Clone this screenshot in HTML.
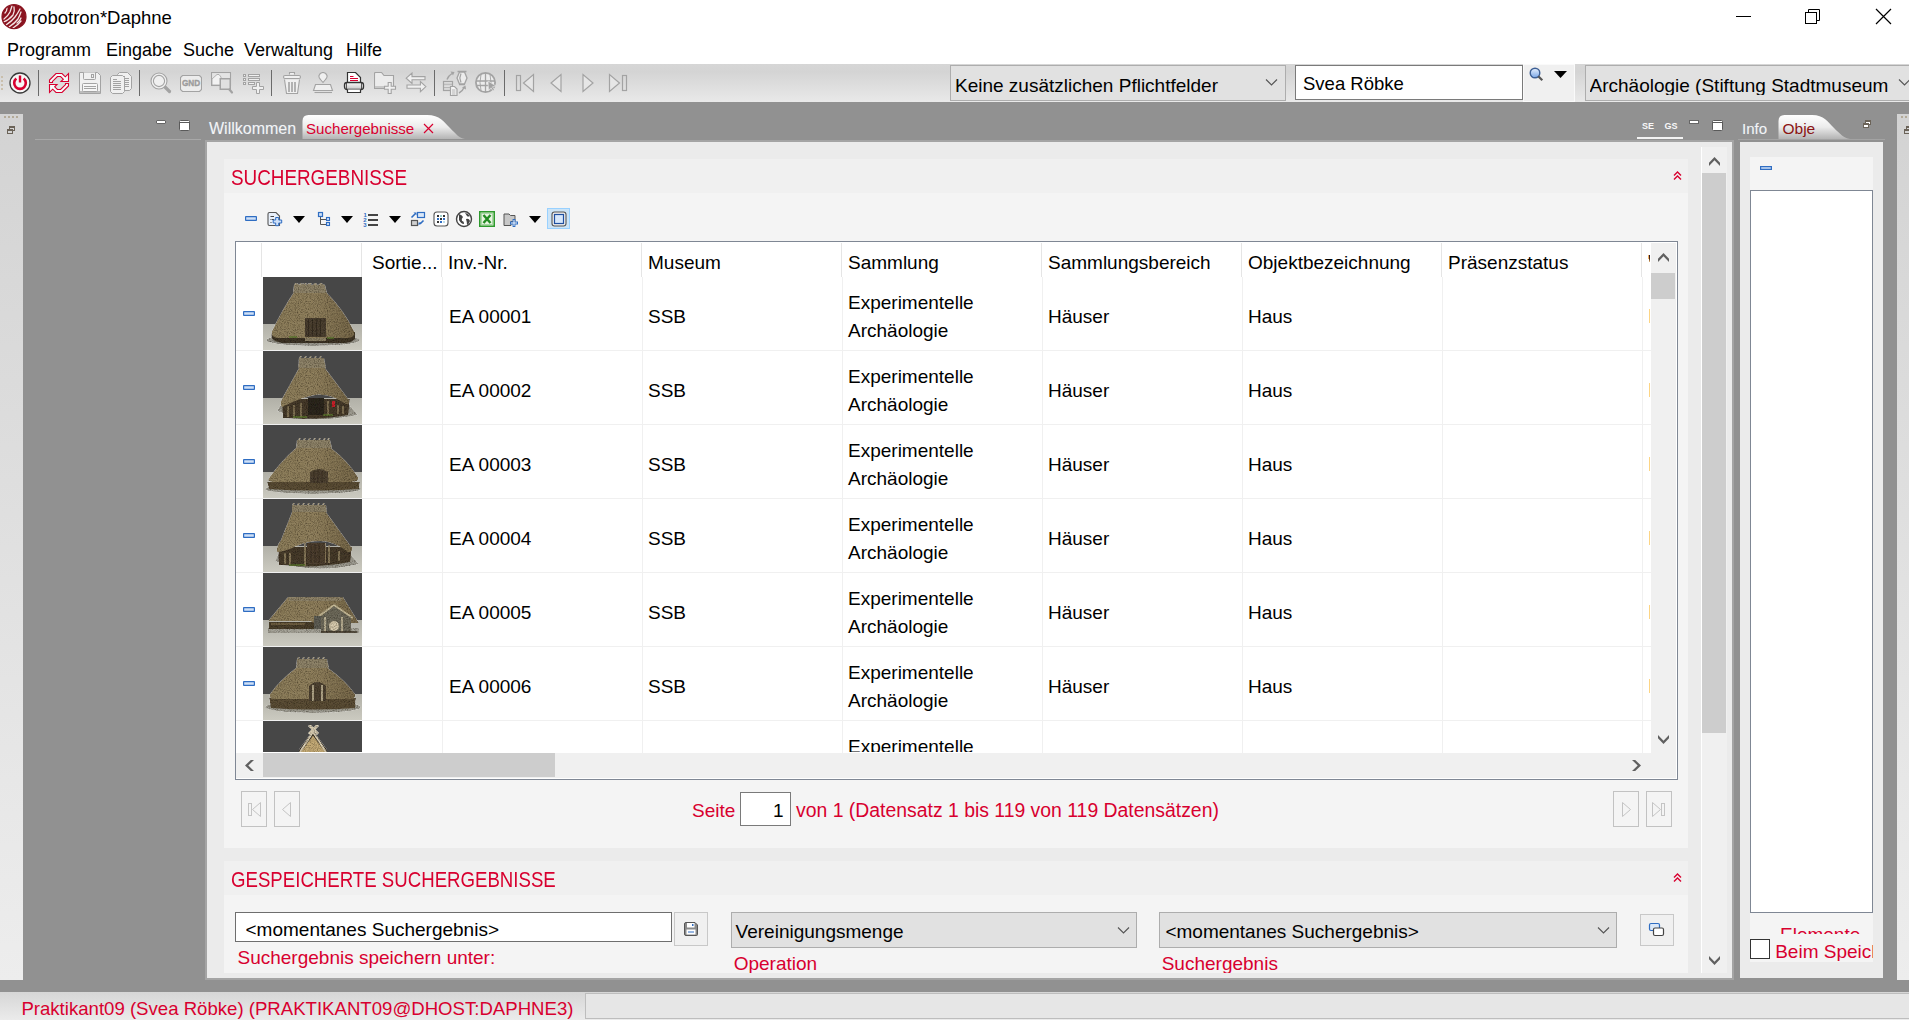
<!DOCTYPE html>
<html><head><meta charset="utf-8"><style>
html,body{margin:0;padding:0;width:1909px;height:1020px;overflow:hidden;background:#919191}
#root{position:relative;width:1909px;height:1020px;overflow:hidden}
#root>div,#root>svg{position:absolute;box-sizing:content-box}
.t{font-family:"Liberation Sans",sans-serif;line-height:1;white-space:pre}
</style></head><body><div id="root">
<svg width="0" height="0" style="left:0;top:0"><defs><linearGradient id="floor" x1="0" y1="0" x2="0" y2="1"><stop offset="0" stop-color="#b1b0a7"/><stop offset="1" stop-color="#cbcac0"/></linearGradient><linearGradient id="thatch" x1="0" y1="0" x2="1" y2="0"><stop offset="0" stop-color="#8c7e5c"/><stop offset=".5" stop-color="#8f805e"/><stop offset="1" stop-color="#76684a"/></linearGradient><filter id="grain" x="0" y="0" width="100%" height="100%"><feTurbulence type="fractalNoise" baseFrequency="0.9" numOctaves="2" seed="4" result="n"/><feColorMatrix in="n" type="matrix" values="1.4 0 0 0 0.15  1.4 0 0 0 0.13  1.4 0 0 0 0.1  0 0 0 0 1" result="g"/><feBlend in="SourceGraphic" in2="g" mode="multiply" result="b"/><feComposite in="b" in2="SourceGraphic" operator="in"/></filter></defs></svg>
<div style="left:0px;top:0px;width:1909px;height:64px;background:#fff"></div>
<svg style="left:0px;top:0px;" width="30" height="30" viewBox="0 0 30 30"><circle cx="14" cy="16.7" r="12" fill="#8a1420"/><g stroke="#f4e4e4" stroke-width="1.3" fill="none" stroke-linecap="round"><path d="M4 19Q8 16 10 12Q11 9 12 6"/><path d="M3.5 22Q9 20 13 15Q15 11 14 7"/><path d="M6 25Q12 21 15 17Q18 13 20 9"/><path d="M9 27Q15 23 18 19Q20 15 21 12"/><path d="M13 28Q18 25 21 21"/><path d="M5 13Q7 11 7 8"/><path d="M17 23Q20 21 21 18"/></g><circle cx="14" cy="16.7" r="12" fill="none" stroke="#8a1420" stroke-width="1.2"/></svg>
<div class="t " style="left:31px;top:9.00px;font-size:18.5px;color:#000;">robotron*Daphne</div>
<div style="left:1736px;top:16px;width:15px;height:1px;background:#000"></div>
<svg style="left:1804px;top:8px;" width="18" height="18" viewBox="0 0 18 18"><rect x="1.5" y="4.5" width="11" height="11" fill="none" stroke="#000"/><path d="M4.5 4.5V1.5h11v11h-3" fill="none" stroke="#000"/></svg>
<svg style="left:1875px;top:8px;" width="17" height="17" viewBox="0 0 17 17"><path d="M1 1L16 16M16 1L1 16" stroke="#000" stroke-width="1.2"/></svg>
<div class="t " style="left:7px;top:41.00px;font-size:18px;color:#000;">Programm</div>
<div class="t " style="left:106px;top:41.00px;font-size:18px;color:#000;">Eingabe</div>
<div class="t " style="left:183px;top:41.00px;font-size:18px;color:#000;">Suche</div>
<div class="t " style="left:244px;top:41.00px;font-size:18px;color:#000;">Verwaltung</div>
<div class="t " style="left:346px;top:41.00px;font-size:18px;color:#000;">Hilfe</div>
<div style="left:0px;top:64px;width:1909px;height:38px;background:linear-gradient(#d6d6d6,#d4d4d4 20%,#e9e9e9)"></div>
<div style="left:1px;top:76px;width:2px;height:2px;background:#c4b69c;border-radius:1px"></div>
<div style="left:1px;top:80px;width:2px;height:2px;background:#c4b69c;border-radius:1px"></div>
<div style="left:1px;top:84px;width:2px;height:2px;background:#c4b69c;border-radius:1px"></div>
<div style="left:1px;top:88px;width:2px;height:2px;background:#c4b69c;border-radius:1px"></div>
<div style="left:38px;top:70px;width:1px;height:26px;background:#6a6a6a"></div>
<div style="left:139px;top:70px;width:1px;height:26px;background:#6a6a6a"></div>
<div style="left:271px;top:70px;width:1px;height:26px;background:#6a6a6a"></div>
<div style="left:434px;top:70px;width:1px;height:26px;background:#6a6a6a"></div>
<div style="left:504px;top:70px;width:1px;height:26px;background:#6a6a6a"></div>
<svg style="left:9px;top:72px;" width="22" height="22" viewBox="0 0 22 22"><circle cx="11" cy="11" r="10" fill="#f6f6f6" stroke="#383838" stroke-width="1.3"/><path d="M7.3 6.6A5.8 5.8 0 1 0 14.7 6.6" fill="none" stroke="#d8002f" stroke-width="2.6"/><path d="M11 3.5v7" stroke="#d8002f" stroke-width="2.4"/></svg>
<svg style="left:46px;top:70px;" width="26" height="26" viewBox="0 0 26 26"><g fill="#f6fbfb" stroke="#d8002f" stroke-width="1.1" stroke-linejoin="miter"><path d="M3.5 12.5L3.5 10L10 3.5L16 3.5L19.3 6.8L22.5 3.6L22.5 11.5L15 11.5L17.3 9.2L14.6 6.5L11.4 6.5L6.5 11.4L6.5 12.5Z"/><path d="M22.5 13.5L22.5 16L16 22.5L10 22.5L6.7 19.2L3.5 22.4L3.5 14.5L11 14.5L8.7 16.8L11.4 19.5L14.6 19.5L19.5 14.6L19.5 13.5Z"/></g></svg>
<svg style="left:79px;top:72px;" width="22" height="22" viewBox="0 0 22 22"><path d="M0.5 0.5H18.5L21.5 3.5V21.5H0.5Z" fill="#f0f0f0" stroke="#a3a3a3"/><rect x="1" y="19" width="20" height="2" fill="#bdbdbd"/><path d="M4.5 0.5V6.5Q4.5 7.5 5.5 7.5H15.5Q16.5 7.5 16.5 6.5V0.5" fill="#f0f0f0" stroke="#a3a3a3"/><rect x="12.5" y="2.5" width="2" height="3" fill="none" stroke="#a3a3a3"/><rect x="3.5" y="11.5" width="15" height="8" rx="1" fill="#f6f6f6" stroke="#a3a3a3"/><path d="M5 14.5H17M5 16.5H17" stroke="#a3a3a3"/></svg>
<svg style="left:110px;top:72px;" width="22" height="23" viewBox="0 0 22 23"><path d="M9.5 0.5H17.5L21.5 4.5V16.5L19.5 18.5H9.5L7.5 16.5V2.5Z" fill="#f0f0f0" stroke="#a3a3a3"/><path d="M11 4.5H15M11 6.5H19M11 8.5H19M11 10.5H19M11 12.5H19M11 14.5H19" stroke="#a3a3a3"/><path d="M2.5 3.5H12.5L14.5 5.5V19.5L12.5 21.5H2.5L0.5 19.5V5.5Z" fill="#f0f0f0" stroke="#a3a3a3"/><path d="M3 7.5H7M3 9.5H11M3 11.5H11M3 13.5H11M3 15.5H11M3 17.5H11" stroke="#a3a3a3"/></svg>
<svg style="left:150px;top:72px;" width="22" height="22" viewBox="0 0 22 22"><path d="M14 14L19.5 19.5" stroke="#a3a3a3" stroke-width="3.2" stroke-linecap="round"/><circle cx="9" cy="9" r="8" fill="#f0f0f0" stroke="#a3a3a3" stroke-width="1.1"/><circle cx="9" cy="9" r="5.6" fill="#f0f0f0" stroke="#a3a3a3" stroke-width="1.1"/></svg>
<svg style="left:180px;top:75px;" width="22" height="17" viewBox="0 0 22 17"><path d="M2.5 0.5H19.5L21.5 2.5V14.5L19.5 16.5H2.5L0.5 14.5V2.5Z" fill="#ececec" stroke="#a3a3a3" stroke-width="1.1"/><text x="11" y="11.2" font-family="Liberation Sans" font-weight="bold" font-size="8.2" fill="#9c9c9c" stroke="#9c9c9c" stroke-width="0.35" text-anchor="middle">GND</text></svg>
<svg style="left:211px;top:72px;" width="23" height="23" viewBox="0 0 23 23"><rect x="0.5" y="0.5" width="19" height="13" fill="#e4e4e4" stroke="#a3a3a3" stroke-width="1.1"/><path d="M1 7L6 2.5H8L10 5V13H1Z" fill="#f2f2f2" stroke="#a3a3a3" stroke-width="0.8"/><rect x="9.25" y="6.75" width="10" height="10.5" fill="#e0e0e0" stroke="#a3a3a3" stroke-width="1.5"/><path d="M18.5 17.5L21 20.5" stroke="#a3a3a3" stroke-width="2.2" stroke-linecap="round"/></svg>
<svg style="left:242px;top:72px;" width="23" height="23" viewBox="0 0 23 23"><g fill="#f0f0f0" stroke="#a3a3a3"><rect x="1.5" y="2.5" width="2" height="2"/><rect x="1.5" y="6.5" width="2" height="2"/><rect x="1.5" y="10.5" width="2" height="2"/><rect x="6.5" y="2.5" width="11" height="2"/><rect x="6.5" y="6.5" width="11" height="2"/><rect x="6.5" y="10.5" width="6" height="2"/><path d="M14.5 10.5H17.5V14.5H21.5V17.5H17.5V21.5H14.5V17.5H10.5V14.5H14.5Z"/></g></svg>
<svg style="left:282px;top:72px;" width="20" height="23" viewBox="0 0 20 23"><g fill="#f0f0f0" stroke="#a3a3a3" stroke-width="1.1"><path d="M7.5 2.5V0.5H12.5V2.5"/><rect x="1.5" y="3.5" width="17" height="3" rx="1.5"/><path d="M2.5 7.5L4.5 21.5H15.5L17.5 7.5"/></g><path d="M7 10v10M10 10v10M13 10v10" stroke="#a3a3a3" stroke-width="1.6"/></svg>
<svg style="left:312px;top:72px;" width="22" height="22" viewBox="0 0 22 22"><g fill="#f0f0f0" stroke="#a3a3a3" stroke-width="1.1"><path d="M11 10.5L8.5 7.5Q6.5 5.5 7 3.5Q8 0.5 11 0.5Q14 0.5 15 3.5Q15.5 5.5 13.5 7.5Z"/><path d="M1.5 18.5L3.5 12.5H18.5L20.5 18.5Z"/></g><path d="M2.5 20.5H20" stroke="#a3a3a3" stroke-width="1.1"/></svg>
<svg style="left:343px;top:72px;" width="22" height="22" viewBox="0 0 22 22"><defs><linearGradient id="pg" x1="0" y1="0" x2="0" y2="1"><stop offset="0" stop-color="#fafafa"/><stop offset="1" stop-color="#c4c4c4"/></linearGradient></defs><path d="M4.5 10.5V0.5H12.5L17.5 5.5V10.5" fill="#fff" stroke="#333" stroke-width="1.2"/><path d="M7 4.5H10.5M7 6.5H15M7 8.5H15" stroke="#d8002f" stroke-width="1"/><rect x="1.5" y="10.5" width="19" height="7" rx="2.5" fill="url(#pg)" stroke="#333" stroke-width="1.3"/><path d="M3.5 11v6M18.5 11v6" stroke="#333" stroke-width="0.8"/><path d="M4.5 17.5V20.5H17.5V17.5" fill="#fff" stroke="#333" stroke-width="1.2"/></svg>
<svg style="left:374px;top:72px;" width="23" height="23" viewBox="0 0 23 23"><path d="M0.5 1.5Q0.5 0.5 1.5 0.5H7.5L10 3.5H19.5V16.5H0.5Z" fill="#ececec" stroke="#a3a3a3" stroke-width="1.1"/><rect x="1" y="14" width="18" height="2" fill="#c8c8c8"/><path d="M14.2 10.5H17.2V14.2H21.5V17.2H17.2V21.5H14.2V17.2H10.5V14.2H14.2Z" fill="#f0f0f0" stroke="#a3a3a3" stroke-width="1.1"/></svg>
<svg style="left:405px;top:72px;" width="22" height="22" viewBox="0 0 22 22"><g fill="#f0f0f0" stroke="#a3a3a3" stroke-width="1.1"><path d="M1.2 6.2L7 1V4.6H20V7.8H7V11.4Z"/><path d="M20.9 14.6L15.4 9.5V13H2V16.2H15.4V19.7Z"/></g></svg>
<svg style="left:442px;top:70px;" width="26" height="27" viewBox="0 0 26 27"><path d="M5 9.5Q6.5 5.5 10 3.5" fill="none" stroke="#a3a3a3" stroke-width="1.4"/><path d="M8.5 1.5l4 0.5-1.5 3.5z" fill="#a3a3a3"/><path d="M15.5 1.5h9M17 14.5h6" stroke="#a3a3a3" stroke-width="1.5"/><path d="M17.5 2l-2.5 6 2.5 6h5l2.5-6-2.5-6z" fill="#ececec" stroke="#a3a3a3" stroke-width="1.3"/><path d="M19 3.5l-1.2 4.5 1.2 4.5" fill="none" stroke="#a3a3a3" stroke-width="1.2"/><rect x="1.5" y="11.5" width="9" height="9" fill="#ececec" stroke="#a3a3a3" stroke-width="1.2"/><path d="M2.5 13.2h1M4.5 13.2h1M6.5 13.2h1M8.5 13.2h1M2.5 19h1M4.5 19h1M6.5 19h1" stroke="#a3a3a3" stroke-width="1"/><path d="M2 14.8h8M2 17.3h8" stroke="#a3a3a3" stroke-width="0.9"/><path d="M8.5 16.5h4l2.5 2.5v6.5H8.5z" fill="#f4f4f4" stroke="#a3a3a3" stroke-width="1.2"/><path d="M10 20h3.5M10 22h3.5M10 24h3.5" stroke="#a3a3a3" stroke-width="0.8"/><path d="M17 23Q20.5 21.5 22 17.5" fill="none" stroke="#a3a3a3" stroke-width="1.4"/><path d="M20 17.5l3.5-2 0.5 4z" fill="#a3a3a3"/></svg>
<svg style="left:474px;top:71px;" width="24" height="24" viewBox="0 0 24 24"><circle cx="11.5" cy="11.5" r="9.6" fill="#ececec" stroke="#a3a3a3" stroke-width="1.8"/><path d="M11.5 2v19M2 10h19M3 14.5h17" fill="none" stroke="#a3a3a3" stroke-width="1.3"/><path d="M7 3.5q-2 8 0 16M16 3.5q2 8 0 16" fill="none" stroke="#a3a3a3" stroke-width="0.9"/><path d="M14 10l8 5-3.5 0.8 2 3.2-1.5 1-2-3.2-2.5 2.5z" fill="#a3a3a3" stroke="#ececec" stroke-width="0.6"/></svg>
<svg style="left:515px;top:72px;" width="20" height="22" viewBox="0 0 20 22"><rect x="1.5" y="3.5" width="4" height="15" fill="none" stroke="#a3a3a3" stroke-width="1.2"/><path d="M18.5 2.5v17l-10-8.5z" fill="#e6e6e6" stroke="#a3a3a3" stroke-width="1.2"/></svg>
<svg style="left:549px;top:72px;" width="14" height="22" viewBox="0 0 14 22"><path d="M12 2.5v17L2 11z" fill="#e6e6e6" stroke="#a3a3a3" stroke-width="1.2"/></svg>
<svg style="left:581px;top:72px;" width="14" height="22" viewBox="0 0 14 22"><path d="M2 2.5v17L12 11z" fill="#e6e6e6" stroke="#a3a3a3" stroke-width="1.2"/></svg>
<svg style="left:608px;top:72px;" width="20" height="22" viewBox="0 0 20 22"><path d="M1.5 2.5v17l10-8.5z" fill="#e6e6e6" stroke="#a3a3a3" stroke-width="1.2"/><rect x="14.5" y="3.5" width="4" height="15" fill="none" stroke="#a3a3a3" stroke-width="1.2"/></svg>
<div style="left:950px;top:65px;width:334px;height:34px;background:#e1e1e1;border:1px solid #adadad"></div>
<div class="t " style="left:955px;top:76.00px;font-size:19px;color:#000;width:309px;overflow:hidden;white-space:nowrap">Keine zusätzlichen Pflichtfelder</div>
<svg style="left:1265px;top:78px;" width="13" height="9" viewBox="0 0 13 9"><path d="M1 1.5l5.5 5.5 5.5-5.5" fill="none" stroke="#555" stroke-width="1.1"/></svg>
<div style="left:1295px;top:65px;width:226px;height:33px;background:#fff;border:1px solid #7a7a7a"></div>
<div class="t " style="left:1303px;top:75.00px;font-size:18.5px;color:#000;">Svea Röbke</div>
<div style="left:1523px;top:64px;width:50px;height:36px;background:#f0f0f0;border:1px solid #fafafa"></div>
<svg style="left:1529px;top:67px;" width="16" height="16" viewBox="0 0 16 16"><defs><linearGradient id="mg" x1="0" y1="0" x2="0" y2="1"><stop offset="0" stop-color="#e8f2ff"/><stop offset="1" stop-color="#7aa6e6"/></linearGradient></defs><circle cx="6" cy="6" r="4.8" fill="url(#mg)" stroke="#3d5f94" stroke-width="1.4"/><path d="M9.3 9.3l4 4" stroke="#555" stroke-width="2.2"/></svg>
<svg style="left:1554px;top:71px;" width="13" height="8" viewBox="0 0 13 8"><path d="M0 0h13L6.5 7z" fill="#000"/></svg>
<div style="left:1585px;top:65px;width:324px;height:34px;background:#e1e1e1;border:1px solid #adadad"></div>
<div class="t " style="left:1589.5px;top:76.00px;font-size:19px;color:#000;width:302px;overflow:hidden;white-space:nowrap">Archäologie (Stiftung Stadtmuseum</div>
<svg style="left:1898px;top:78px;" width="11" height="9" viewBox="0 0 11 9"><path d="M1 1.5l5.5 5.5 5.5-5.5" fill="none" stroke="#555" stroke-width="1.1"/></svg>
<div style="left:0px;top:102px;width:1909px;height:890px;background:#919191"></div>
<div style="left:0px;top:114px;width:23px;height:866px;background:linear-gradient(#d3d3d3,#ededed)"></div>
<div style="left:4px;top:116px;width:2px;height:2px;background:#a89c84;border-radius:1px"></div>
<div style="left:8px;top:116px;width:2px;height:2px;background:#a89c84;border-radius:1px"></div>
<div style="left:12px;top:116px;width:2px;height:2px;background:#a89c84;border-radius:1px"></div>
<div style="left:16px;top:116px;width:2px;height:2px;background:#a89c84;border-radius:1px"></div>
<div style="left:9px;top:126px;width:4px;height:2px;border:1px solid #6b6358;border-top-width:2px;background:#d4d4d4"></div>
<div style="left:7px;top:129px;width:4px;height:2px;border:1px solid #6b6358;border-top-width:2px;background:#d4d4d4"></div>
<div style="left:156px;top:120px;width:10px;height:4px;background:#fff;border-radius:1px;box-shadow:0 0 0 1px #666 inset"></div>
<svg style="left:179px;top:120px;" width="11" height="11" viewBox="0 0 11 11"><rect x="0.5" y="0.5" width="10" height="10" rx="1" fill="#fff" stroke="#5a5a5a"/><path d="M1 2.5h9" stroke="#5a5a5a"/></svg>
<div style="left:35px;top:139px;width:166px;height:1px;background:#a8a8a8"></div>
<div class="t " style="left:209px;top:121.00px;font-size:16px;color:#f4f4f4;text-shadow:0 0 1px #9ab">Willkommen</div>
<svg style="left:302px;top:114px;" width="165" height="25" viewBox="0 0 165 25"><defs><linearGradient id="tg" x1="0" y1="0" x2="0" y2="1"><stop offset="0" stop-color="#ffffff"/><stop offset=".5" stop-color="#ececec"/><stop offset="1" stop-color="#b4b4b4"/></linearGradient></defs><path d="M0.5 25V7Q0.5 1 6.5 1H125C138 1 142 8 148 14C154 20 157 24 163 25z" fill="url(#tg)"/></svg>
<div class="t " style="left:306px;top:121.00px;font-size:15.1px;color:#d8002f;">Suchergebnisse</div>
<svg style="left:423px;top:123px;" width="11" height="11" viewBox="0 0 11 11"><path d="M1 1l9 9M10 1L1 10" stroke="#d8002f" stroke-width="1.2"/></svg>
<div class="t " style="left:1642px;top:122.00px;font-size:9px;color:#f8f8f8;font-weight:bold">SE</div>
<div class="t " style="left:1664.5px;top:122.00px;font-size:9px;color:#f8f8f8;font-weight:bold">GS</div>
<div style="left:1637px;top:137px;width:46px;height:2px;background:#f4f4f4"></div>
<div style="left:1689px;top:120px;width:10px;height:4px;background:#fff;box-shadow:0 0 0 1px #666 inset"></div>
<svg style="left:1712px;top:120px;" width="11" height="11" viewBox="0 0 11 11"><rect x="0.5" y="0.5" width="10" height="10" rx="1" fill="#fff" stroke="#5a5a5a"/><path d="M1 2.5h9" stroke="#5a5a5a"/></svg>
<div style="left:205px;top:140px;width:1525px;height:836px;background:#ebebeb;border:2px solid #a4a4a4"></div>
<div style="left:224px;top:159px;width:1464px;height:34px;background:#f0f0f0"></div>
<div style="left:224px;top:193px;width:1464px;height:655px;background:#f4f4f4"></div>
<div class="t " style="left:230.5px;top:167.00px;font-size:22px;color:#d8002f;transform:scaleX(0.857);transform-origin:0 0">SUCHERGEBNISSE</div>
<svg style="left:1673px;top:171px;" width="9" height="10" viewBox="0 0 9 10"><path d="M1 4.5L4.5 1 8 4.5M1 8.5L4.5 5 8 8.5" fill="none" stroke="#d8002f" stroke-width="1.4"/></svg>
<div style="left:1701px;top:147px;width:1px;height:826px;background:#fff"></div>
<div style="left:1702px;top:147px;width:25px;height:826px;background:#f0f0f0"></div>
<div style="left:1702px;top:173px;width:24px;height:560px;background:#cdcdcd"></div>
<svg style="left:1709px;top:157px;" width="11" height="9" viewBox="0 0 11 9"><path d="M0 5.8L5.5 0 11 5.8V9L5.5 3.3 0 9z" fill="#606060"/></svg>
<svg style="left:1709px;top:956px;" width="11" height="9" viewBox="0 0 11 9"><path d="M0 0L5.5 5.7 11 0V3.2L5.5 9 0 3.2z" fill="#606060"/></svg>
<div style="left:245px;top:216px;width:12px;height:5px;background:#cfe0f7;box-shadow:inset 0 0 0 1.2px #2f6dc2;border-radius:1px"></div>
<svg style="left:267px;top:211px;" width="16" height="16" viewBox="0 0 16 16"><path d="M2.5 1.5H9L12.5 5V14.5H2.5Q1 14.5 1 13V3Q1 1.5 2.5 1.5Z" fill="#e8f0fb" stroke="#555" stroke-width="1.1"/><path d="M3.5 5.5H7M5 8.5H7" stroke="#444"/><rect x="3.5" y="8" width="1" height="1" fill="#444"/><rect x="3.5" y="11" width="1" height="1" fill="#444"/><path d="M8.7 6.5H11.7V9H14.7V12H11.7V14.7H8.7V12H6.2V9H8.7Z" fill="#cfe0f7" stroke="#2f6dc2" stroke-width="1"/></svg>
<svg style="left:292.5px;top:215.5px;" width="12" height="7" viewBox="0 0 12 7"><path d="M0 0h12L6 7z" fill="#000"/></svg>
<svg style="left:340.5px;top:215.5px;" width="12" height="7" viewBox="0 0 12 7"><path d="M0 0h12L6 7z" fill="#000"/></svg>
<svg style="left:388.5px;top:215.5px;" width="12" height="7" viewBox="0 0 12 7"><path d="M0 0h12L6 7z" fill="#000"/></svg>
<svg style="left:528.5px;top:215.5px;" width="12" height="7" viewBox="0 0 12 7"><path d="M0 0h12L6 7z" fill="#000"/></svg>
<svg style="left:317px;top:211px;" width="15" height="16" viewBox="0 0 15 16"><path d="M3.5 6V13.5H9.5M3.5 8.5H9.5" fill="none" stroke="#555"/><rect x="1.5" y="1.5" width="4" height="4" fill="#cfe0f7" stroke="#2f6dc2" stroke-width="1.2"/><rect x="9.5" y="6.5" width="3" height="3" fill="#cfe0f7" stroke="#2f6dc2" stroke-width="1.1"/><rect x="9.5" y="11.5" width="3" height="3" fill="#cfe0f7" stroke="#2f6dc2" stroke-width="1.1"/></svg>
<svg style="left:363px;top:211px;" width="16" height="16" viewBox="0 0 16 16"><g font-family="Liberation Sans" font-weight="bold" font-size="6" fill="#2f6dc2"><text x="0.6" y="6">1</text><text x="0.3" y="11">2</text><text x="0.3" y="15.5">3</text></g><path d="M5 4h10M5 9h10M5 14h10" stroke="#444" stroke-width="2"/></svg>
<svg style="left:410px;top:211px;" width="16" height="16" viewBox="0 0 16 16"><rect x="7.5" y="1.5" width="7" height="5" fill="#dbe8f8" stroke="#2f6dc2" stroke-width="1.2"/><rect x="1.5" y="9.5" width="6" height="5" fill="#d0d0d0" stroke="#555" stroke-width="1.2"/><path d="M1.5 6.5L5 3" stroke="#2f6dc2" stroke-width="1.6"/><path d="M3.5 1.5H6.5V4.5z" fill="#2f6dc2"/><path d="M13.5 9.5L10 13" stroke="#2f6dc2" stroke-width="1.6"/><path d="M8.5 14.5V11.5H11.5z" fill="#2f6dc2"/></svg>
<svg style="left:433px;top:211px;" width="16" height="16" viewBox="0 0 16 16"><rect x="1" y="1" width="14" height="14" rx="3" fill="#fff" stroke="#555" stroke-width="1.1"/><g fill="#333"><rect x="4" y="4" width="2" height="2"/><rect x="10" y="4" width="2" height="2"/><rect x="7" y="7" width="2" height="2"/><rect x="4" y="10" width="2" height="2"/></g><g fill="#2f6dc2"><rect x="7" y="4" width="2" height="2" fill="#9cc"/><rect x="4" y="7" width="2" height="2"/><rect x="10" y="7" width="2" height="2"/><rect x="7" y="10" width="2" height="2"/><rect x="10" y="10" width="2" height="2" fill="#bde"/></g></svg>
<svg style="left:455px;top:210px;" width="18" height="18" viewBox="0 0 18 18"><circle cx="9" cy="9" r="7.5" fill="#fff" stroke="#444" stroke-width="1.4"/><path d="M4 4q3 1 4 3-2 2-1 4 2 0 2 3-3 0-5-4zM10 3q3 0 5 3-2 1-3 0zM11 9q3-1 4 2-1 3-3 4 0-3-1-6z" fill="#444"/></svg>
<svg style="left:479px;top:211px;" width="16" height="16" viewBox="0 0 16 16"><rect x="0.75" y="0.75" width="14.5" height="14.5" fill="#d6ecc8" stroke="#2e9a2e" stroke-width="1.5"/><rect x="2.5" y="2.5" width="11" height="11" fill="#e8f4e0" stroke="#9ccf9c" stroke-width="0.8"/><path d="M4.5 4L11.5 12M11.5 4L4.5 12" stroke="#228b22" stroke-width="2.4"/></svg>
<svg style="left:503px;top:212px;" width="16" height="15" viewBox="0 0 16 15"><path d="M1 2h5l1.5 1.5H12v6H8v4H1z" fill="#c8c8c8" stroke="#555" stroke-width="1"/><path d="M11 7v8M7 11h8" stroke="#2f6dc2" stroke-width="2.8"/><path d="M11 8v6M8 11h6" stroke="#fff" stroke-width="0.9"/></svg>
<div style="left:547px;top:208px;width:21px;height:19px;background:#cce4f7;border:1px solid #99d1ff"></div>
<svg style="left:551px;top:211px;" width="16" height="16" viewBox="0 0 16 16"><rect x="1" y="1" width="14" height="14" rx="2.5" fill="#eee" stroke="#555" stroke-width="1.1"/><rect x="3.5" y="3.5" width="9" height="9" fill="#d8e8fb" stroke="#1f4fa0" stroke-width="1.2"/></svg>
<div style="left:235px;top:241px;width:1441px;height:537px;background:#fff;border:1px solid #7f8794"></div>
<div style="left:1651px;top:243px;width:25px;height:510px;background:#f0f0f0"></div>
<div style="left:1651px;top:273px;width:24px;height:26px;background:#cdcdcd"></div>
<svg style="left:1658px;top:253px;" width="11" height="9" viewBox="0 0 11 9"><path d="M0 5.8L5.5 0 11 5.8V9L5.5 3.3 0 9z" fill="#606060"/></svg>
<svg style="left:1658px;top:735px;" width="11" height="9" viewBox="0 0 11 9"><path d="M0 0L5.5 5.7 11 0V3.2L5.5 9 0 3.2z" fill="#606060"/></svg>
<div style="left:236px;top:753px;width:1415px;height:25px;background:#f0f0f0"></div>
<div style="left:1651px;top:753px;width:25px;height:25px;background:#f0f0f0"></div>
<div style="left:263px;top:753px;width:292px;height:24px;background:#cdcdcd"></div>
<svg style="left:245px;top:760px;" width="9" height="11" viewBox="0 0 9 11"><path d="M5.8 0L0 5.5 5.8 11H9L3.3 5.5 9 0z" fill="#606060"/></svg>
<svg style="left:1632px;top:760px;" width="9" height="11" viewBox="0 0 9 11"><path d="M3.2 0L9 5.5 3.2 11H0L5.7 5.5 0 0z" fill="#606060"/></svg>
<div style="left:261px;top:243px;width:1px;height:34px;background:#e5e5e5"></div>
<div style="left:361px;top:243px;width:1px;height:34px;background:#e5e5e5"></div>
<div style="left:441px;top:243px;width:1px;height:34px;background:#e5e5e5"></div>
<div style="left:641px;top:243px;width:1px;height:34px;background:#e5e5e5"></div>
<div style="left:841px;top:243px;width:1px;height:34px;background:#e5e5e5"></div>
<div style="left:1041px;top:243px;width:1px;height:34px;background:#e5e5e5"></div>
<div style="left:1241px;top:243px;width:1px;height:34px;background:#e5e5e5"></div>
<div style="left:1441px;top:243px;width:1px;height:34px;background:#e5e5e5"></div>
<div style="left:1641px;top:243px;width:1px;height:34px;background:#e5e5e5"></div>
<div style="left:442px;top:277px;width:1px;height:476px;background:#f0f0f0"></div>
<div style="left:642px;top:277px;width:1px;height:476px;background:#f0f0f0"></div>
<div style="left:842px;top:277px;width:1px;height:476px;background:#f0f0f0"></div>
<div style="left:1042px;top:277px;width:1px;height:476px;background:#f0f0f0"></div>
<div style="left:1242px;top:277px;width:1px;height:476px;background:#f0f0f0"></div>
<div style="left:1442px;top:277px;width:1px;height:476px;background:#f0f0f0"></div>
<div style="left:1642px;top:277px;width:1px;height:476px;background:#f0f0f0"></div>
<div style="left:236px;top:350px;width:1415px;height:1px;background:#f0f0f0"></div>
<div style="left:236px;top:424px;width:1415px;height:1px;background:#f0f0f0"></div>
<div style="left:236px;top:498px;width:1415px;height:1px;background:#f0f0f0"></div>
<div style="left:236px;top:572px;width:1415px;height:1px;background:#f0f0f0"></div>
<div style="left:236px;top:646px;width:1415px;height:1px;background:#f0f0f0"></div>
<div style="left:236px;top:720px;width:1415px;height:1px;background:#f0f0f0"></div>
<div class="t " style="left:372px;top:253.00px;font-size:19px;color:#000;">Sortie...</div>
<div class="t " style="left:448px;top:253.00px;font-size:19px;color:#000;">Inv.-Nr.</div>
<div class="t " style="left:648px;top:253.00px;font-size:19px;color:#000;">Museum</div>
<div class="t " style="left:848px;top:253.00px;font-size:19px;color:#000;">Sammlung</div>
<div class="t " style="left:1048px;top:253.00px;font-size:19px;color:#000;">Sammlungsbereich</div>
<div class="t " style="left:1248px;top:253.00px;font-size:19px;color:#000;">Objektbezeichnung</div>
<div class="t " style="left:1448px;top:253.00px;font-size:19px;color:#000;">Präsenzstatus</div>
<div style="left:1648px;top:255px;width:1px;height:4px;background:#f0b060"></div>
<div style="left:1649px;top:255px;width:1px;height:7px;background:linear-gradient(#1a1030,#5a3010 60%,#f0c080)"></div>
<svg style="left:263px;top:277px;" width="99" height="73" viewBox="0 0 99 73"><rect width="99" height="73" fill="#474747"/><rect y="47" width="99" height="26" fill="url(#floor)"/><g filter="url(#grain)"><ellipse cx="50" cy="63" rx="47" ry="6" fill="#999890"/><path d="M9 55Q5 64 20 66H82Q95 65 92 55z" fill="#3e3526"/><path d="M31 15H63Q81 33 91 54Q93 61 84 61H16Q7 61 9 54Q19 33 31 15Z" fill="url(#thatch)"/><path d="M30 16L31 8L34 6L37 8L40 6L43 8L46 6L49 8L52 6L55 8L58 6L62 8L64 16Z" fill="#8d836a"/><path d="M32 8l1-2M37 8l1-2M42 8l1-2M47 8l1-2M52 8l1-2M57 8l1-2" stroke="#a89e84" stroke-width="1.5"/><rect x="42" y="41" width="21" height="19" fill="#4b4031"/><path d="M45.5 42v17M49.5 42v17M53.5 42v17M57.5 42v17" stroke="#372e22"/><path d="M42 61h21v3H42z" fill="#8a8066"/><path d="M26 60h8M64 61h7" stroke="#5d7a30" stroke-width="1.5"/></g></svg>
<div style="left:243px;top:311px;width:12px;height:5px;background:#cfe0f7;box-shadow:inset 0 0 0 1.2px #2f6dc2;border-radius:1px"></div>
<div class="t " style="left:449px;top:307.00px;font-size:19px;color:#000;">EA 00001</div>
<div class="t " style="left:648px;top:307.00px;font-size:19px;color:#000;">SSB</div>
<div class="t " style="left:848px;top:293.00px;font-size:19px;color:#000;">Experimentelle</div>
<div class="t " style="left:848px;top:321.00px;font-size:19px;color:#000;">Archäologie</div>
<div class="t " style="left:1048px;top:307.00px;font-size:19px;color:#000;">Häuser</div>
<div class="t " style="left:1248px;top:307.00px;font-size:19px;color:#000;">Haus</div>
<div style="left:1649px;top:309px;width:1px;height:14px;background:#fdd584"></div>
<svg style="left:263px;top:351px;" width="99" height="73" viewBox="0 0 99 73"><rect width="99" height="73" fill="#474747"/><rect y="47" width="99" height="26" fill="url(#floor)"/><g filter="url(#grain)"><path d="M14 60Q50 74 95 64L86 54H18z" fill="#9c9b92"/><path d="M19 48L20 67Q50 70 85 64L87 48z" fill="#463b2b"/><path d="M25 55v11M31 54v13M38 52v15M60 50v14M65 50v14M75 54v9M80 55v8" stroke="#8b7d5e" stroke-width="1.6"/><path d="M45 47h16v17H45z" fill="#2c261d"/><rect x="69" y="50" width="3" height="6" fill="#c8202a"/><path d="M36 17H62L86 49Q88 53 83 53Q66 42 52 44Q34 48 19 56Q16 52 20 46Z" fill="url(#thatch)"/><path d="M35 17L36 7H61L63 17Z" fill="#8d836a"/><path d="M37 7l1-2M42 7l1-2M47 7l1-2M52 7l1-2M57 7l1-2" stroke="#a89e84" stroke-width="1.5"/><path d="M30 66h14M60 64h10" stroke="#5d7a30" stroke-width="1.5"/></g></svg>
<div style="left:243px;top:385px;width:12px;height:5px;background:#cfe0f7;box-shadow:inset 0 0 0 1.2px #2f6dc2;border-radius:1px"></div>
<div class="t " style="left:449px;top:381.00px;font-size:19px;color:#000;">EA 00002</div>
<div class="t " style="left:648px;top:381.00px;font-size:19px;color:#000;">SSB</div>
<div class="t " style="left:848px;top:367.00px;font-size:19px;color:#000;">Experimentelle</div>
<div class="t " style="left:848px;top:395.00px;font-size:19px;color:#000;">Archäologie</div>
<div class="t " style="left:1048px;top:381.00px;font-size:19px;color:#000;">Häuser</div>
<div class="t " style="left:1248px;top:381.00px;font-size:19px;color:#000;">Haus</div>
<div style="left:1649px;top:383px;width:1px;height:14px;background:#fdd584"></div>
<svg style="left:263px;top:425px;" width="99" height="73" viewBox="0 0 99 73"><rect width="99" height="73" fill="#474747"/><rect y="47" width="99" height="26" fill="url(#floor)"/><g filter="url(#grain)"><ellipse cx="50" cy="64" rx="48" ry="5" fill="#9c9b92"/><path d="M4 57H97L96 64Q50 67 6 64z" fill="#5a4d36"/><path d="M33 23H68Q85 36 95 52Q97 57 88 57H10Q3 57 6 53Q18 36 33 23Z" fill="url(#thatch)"/><path d="M47 58V47Q56 41 65 47V58z" fill="#4e4333"/><path d="M51 46v12M55 45v13M59 46v12" stroke="#3a3124"/><path d="M33 23L34 15H67L69 23Z" fill="#8d836a"/><path d="M36 15l1-2M41 15l1-2M46 15l1-2M51 15l1-2M56 15l1-2M61 15l1-2M65 15l1-2" stroke="#a89e84" stroke-width="1.5"/></g></svg>
<div style="left:243px;top:459px;width:12px;height:5px;background:#cfe0f7;box-shadow:inset 0 0 0 1.2px #2f6dc2;border-radius:1px"></div>
<div class="t " style="left:449px;top:455.00px;font-size:19px;color:#000;">EA 00003</div>
<div class="t " style="left:648px;top:455.00px;font-size:19px;color:#000;">SSB</div>
<div class="t " style="left:848px;top:441.00px;font-size:19px;color:#000;">Experimentelle</div>
<div class="t " style="left:848px;top:469.00px;font-size:19px;color:#000;">Archäologie</div>
<div class="t " style="left:1048px;top:455.00px;font-size:19px;color:#000;">Häuser</div>
<div class="t " style="left:1248px;top:455.00px;font-size:19px;color:#000;">Haus</div>
<div style="left:1649px;top:457px;width:1px;height:14px;background:#fdd584"></div>
<svg style="left:263px;top:499px;" width="99" height="73" viewBox="0 0 99 73"><rect width="99" height="73" fill="#474747"/><rect y="47" width="99" height="26" fill="url(#floor)"/><g filter="url(#grain)"><path d="M12 62Q50 76 96 65L86 54H16z" fill="#9c9b92"/><path d="M15 48L16 66Q50 70 87 63L89 48z" fill="#463b2b"/><path d="M22 54v11M27 54v12M42 44v23M62 44v20M66 46v18M76 52v10" stroke="#8b7d5e" stroke-width="1.8"/><path d="M44 44h18v21H44z" fill="#4e4030"/><path d="M48 45v19M52 45v19M56 45v19" stroke="#3a3024"/><path d="M29 13H63L89 49Q90 53 85 53Q72 43 58 42Q45 42 34 47Q20 53 14 53Q13 47 18 41Z" fill="url(#thatch)"/><path d="M29 13L29 6H63L64 13Z" fill="#8d836a"/><path d="M30 6l1-2M35 6l1-2M40 6l1-2M45 6l1-2M50 6l1-2M55 6l1-2M60 6l1-2" stroke="#a89e84" stroke-width="1.5"/><path d="M26 66h16" stroke="#5d7a30" stroke-width="1.5"/></g></svg>
<div style="left:243px;top:533px;width:12px;height:5px;background:#cfe0f7;box-shadow:inset 0 0 0 1.2px #2f6dc2;border-radius:1px"></div>
<div class="t " style="left:449px;top:529.00px;font-size:19px;color:#000;">EA 00004</div>
<div class="t " style="left:648px;top:529.00px;font-size:19px;color:#000;">SSB</div>
<div class="t " style="left:848px;top:515.00px;font-size:19px;color:#000;">Experimentelle</div>
<div class="t " style="left:848px;top:543.00px;font-size:19px;color:#000;">Archäologie</div>
<div class="t " style="left:1048px;top:529.00px;font-size:19px;color:#000;">Häuser</div>
<div class="t " style="left:1248px;top:529.00px;font-size:19px;color:#000;">Haus</div>
<div style="left:1649px;top:531px;width:1px;height:14px;background:#fdd584"></div>
<svg style="left:263px;top:573px;" width="99" height="73" viewBox="0 0 99 73"><rect width="99" height="73" fill="#474747"/><rect y="47" width="99" height="26" fill="url(#floor)"/><g filter="url(#grain)"><path d="M5 55H96V60H5z" fill="#a5a49b"/><path d="M6 49H58V56H6z" fill="#4a3f2c"/><path d="M8 51H42" stroke="#7a6a48" stroke-width="1.5"/><path d="M25 24H80L96 50H52L46 48H5Z" fill="url(#thatch)"/><path d="M25 24H80L78 28H26Z" fill="#8d836a"/><path d="M58 43L71 33L88 44V59H58z" fill="#6d6a5c"/><path d="M56 43L71 32L90 45" fill="none" stroke="#c6bc9c" stroke-width="1.6"/><path d="M51 43H58V56H51z" fill="#5e5e56"/><path d="M62 44v15M79 44v15" stroke="#d0c6a8" stroke-width="1.5"/><ellipse cx="71" cy="53" rx="5" ry="5" fill="#d6cbb0"/><path d="M58 59H94" stroke="#3e3526" stroke-width="1.5"/></g></svg>
<div style="left:243px;top:607px;width:12px;height:5px;background:#cfe0f7;box-shadow:inset 0 0 0 1.2px #2f6dc2;border-radius:1px"></div>
<div class="t " style="left:449px;top:603.00px;font-size:19px;color:#000;">EA 00005</div>
<div class="t " style="left:648px;top:603.00px;font-size:19px;color:#000;">SSB</div>
<div class="t " style="left:848px;top:589.00px;font-size:19px;color:#000;">Experimentelle</div>
<div class="t " style="left:848px;top:617.00px;font-size:19px;color:#000;">Archäologie</div>
<div class="t " style="left:1048px;top:603.00px;font-size:19px;color:#000;">Häuser</div>
<div class="t " style="left:1248px;top:603.00px;font-size:19px;color:#000;">Haus</div>
<div style="left:1649px;top:605px;width:1px;height:14px;background:#fdd584"></div>
<svg style="left:263px;top:647px;" width="99" height="73" viewBox="0 0 99 73"><rect width="99" height="73" fill="#474747"/><rect y="47" width="99" height="26" fill="url(#floor)"/><g filter="url(#grain)"><ellipse cx="50" cy="60" rx="48" ry="6" fill="#9c9b92"/><path d="M6 51H93L92 61Q50 64 8 61z" fill="#5a4d36"/><path d="M33 21H65Q82 33 92 47Q94 52 86 52H12Q5 52 7 47Q17 33 33 21Z" fill="url(#thatch)"/><path d="M46 54V39Q54 31 63 39V54z" fill="#4e4333"/><path d="M50 38v16M59 38v16" stroke="#d0c6a8" stroke-width="1.5"/><path d="M33 21L34 12H64L66 21Z" fill="#8d836a"/><path d="M35 12l1-2M40 12l1-2M45 12l1-2M50 12l1-2M55 12l1-2M60 12l1-2" stroke="#a89e84" stroke-width="1.5"/></g></svg>
<div style="left:243px;top:681px;width:12px;height:5px;background:#cfe0f7;box-shadow:inset 0 0 0 1.2px #2f6dc2;border-radius:1px"></div>
<div class="t " style="left:449px;top:677.00px;font-size:19px;color:#000;">EA 00006</div>
<div class="t " style="left:648px;top:677.00px;font-size:19px;color:#000;">SSB</div>
<div class="t " style="left:848px;top:663.00px;font-size:19px;color:#000;">Experimentelle</div>
<div class="t " style="left:848px;top:691.00px;font-size:19px;color:#000;">Archäologie</div>
<div class="t " style="left:1048px;top:677.00px;font-size:19px;color:#000;">Häuser</div>
<div class="t " style="left:1248px;top:677.00px;font-size:19px;color:#000;">Haus</div>
<div style="left:1649px;top:679px;width:1px;height:14px;background:#fdd584"></div>
<svg style="left:263px;top:721px;" width="99" height="31" viewBox="0 0 99 31"><rect width="99" height="73" fill="#474747"/><rect y="47" width="99" height="26" fill="url(#floor)"/><g filter="url(#grain)"><path d="M36 31L50 12L64 31Z" fill="#c3ab78"/><path d="M50 12L36 31M50 12L64 31" stroke="#332b20" stroke-width="3"/><path d="M50 11L37 31M50 11L63 31" stroke="#d9cfb6" stroke-width="2"/><path d="M46 4L55 13M55 4L46 13" stroke="#d9cfb6" stroke-width="3"/></g></svg>
<div class="t " style="left:848px;top:737.00px;font-size:19px;color:#000;height:15px;overflow:hidden">Experimentelle</div>
<div style="left:241px;top:791px;width:24px;height:34px;border:1px solid #c2c2c2;background:#f4f4f4"></div>
<svg style="left:242px;top:792px;" width="24" height="34" viewBox="0 0 24 34"><rect x="6.5" y="11.5" width="3" height="12" fill="none" stroke="#c4c4c4"/><path d="M18.5 10.5v14l-8-7z" fill="none" stroke="#c4c4c4"/></svg>
<div style="left:274px;top:791px;width:24px;height:34px;border:1px solid #c2c2c2;background:#f4f4f4"></div>
<svg style="left:275px;top:792px;" width="24" height="34" viewBox="0 0 24 34"><path d="M15.5 10.5v14l-8-7z" fill="none" stroke="#c4c4c4"/></svg>
<div style="left:1613px;top:791px;width:24px;height:34px;border:1px solid #c2c2c2;background:#f4f4f4"></div>
<svg style="left:1614px;top:792px;" width="24" height="34" viewBox="0 0 24 34"><path d="M8.5 10.5v14l8-7z" fill="none" stroke="#c4c4c4"/></svg>
<div style="left:1646px;top:791px;width:24px;height:34px;border:1px solid #c2c2c2;background:#f4f4f4"></div>
<svg style="left:1647px;top:792px;" width="24" height="34" viewBox="0 0 24 34"><path d="M5.5 10.5v14l8-7z" fill="none" stroke="#c4c4c4"/><rect x="14.5" y="11.5" width="3" height="12" fill="none" stroke="#c4c4c4"/></svg>
<div class="t " style="left:692px;top:801.00px;font-size:19px;color:#d8002f;">Seite</div>
<div style="left:740px;top:792px;width:49px;height:32px;background:#fff;border:1px solid #7a7a7a"></div>
<div class="t " style="left:773px;top:801.00px;font-size:19px;color:#000;">1</div>
<div class="t " style="left:796px;top:801.00px;font-size:19.4px;color:#d8002f;">von 1 (Datensatz 1 bis 119 von 119 Datensätzen)</div>
<div style="left:224px;top:861px;width:1464px;height:34px;background:#f0f0f0"></div>
<div style="left:224px;top:895px;width:1464px;height:78px;background:#f4f4f4"></div>
<div class="t " style="left:230.5px;top:869.00px;font-size:22px;color:#d8002f;transform:scaleX(0.847);transform-origin:0 0">GESPEICHERTE SUCHERGEBNISSE</div>
<svg style="left:1673px;top:873px;" width="9" height="10" viewBox="0 0 9 10"><path d="M1 4.5L4.5 1 8 4.5M1 8.5L4.5 5 8 8.5" fill="none" stroke="#d8002f" stroke-width="1.4"/></svg>
<div style="left:235px;top:912px;width:435px;height:28px;background:#fff;border:1px solid #6e6e6e;overflow:hidden"></div>
<div class="t " style="left:245.5px;top:920.00px;font-size:19px;color:#000;height:21.0px;overflow:hidden">&lt;momentanes Suchergebnis&gt;</div>
<div class="t " style="left:237.5px;top:948.00px;font-size:19px;color:#d8002f;">Suchergebnis speichern unter:</div>
<div style="left:674px;top:912px;width:32px;height:32px;background:#f0f0f0;border:1px solid #c8c8c8"></div>
<svg style="left:683px;top:921px;" width="16" height="16" viewBox="0 0 16 16"><path d="M1.5 3Q1.5 1.5 3 1.5h9l2.5 2.5v9.5q0 1-1 1H3q-1.5 0-1.5-1.5z" fill="#8a8a8a" stroke="#555" stroke-width="1"/><rect x="4" y="2" width="7.5" height="4.5" fill="#fff"/><rect x="9" y="3" width="1.5" height="2" fill="#2f6dc2"/><rect x="3.5" y="8.5" width="9" height="5" fill="#fff"/><path d="M5 11h6" stroke="#2f6dc2"/></svg>
<div style="left:731px;top:912px;width:404px;height:34px;background:#e1e1e1;border:1px solid #adadad"></div>
<div class="t " style="left:735.6px;top:922.00px;font-size:19px;color:#000;">Vereinigungsmenge</div>
<svg style="left:1117px;top:926px;" width="13" height="9" viewBox="0 0 13 9"><path d="M1 1.5l5.5 5.5 5.5-5.5" fill="none" stroke="#555" stroke-width="1.1"/></svg>
<div class="t " style="left:733.7px;top:954.00px;font-size:19px;color:#d8002f;height:19.0px;overflow:hidden">Operation</div>
<div style="left:1159px;top:912px;width:456px;height:34px;background:#e1e1e1;border:1px solid #adadad"></div>
<div class="t " style="left:1165.4px;top:922.00px;font-size:19px;color:#000;">&lt;momentanes Suchergebnis&gt;</div>
<svg style="left:1597px;top:926px;" width="13" height="9" viewBox="0 0 13 9"><path d="M1 1.5l5.5 5.5 5.5-5.5" fill="none" stroke="#555" stroke-width="1.1"/></svg>
<div class="t " style="left:1161.7px;top:954.00px;font-size:19px;color:#d8002f;height:19.0px;overflow:hidden">Suchergebnis</div>
<div style="left:1640px;top:914px;width:32px;height:30px;background:#f0f0f0;border:1px solid #c8c8c8"></div>
<svg style="left:1648px;top:922px;" width="17" height="15" viewBox="0 0 17 15"><rect x="1.5" y="1.5" width="10" height="7" rx="1.5" fill="#dbe8f8" stroke="#2f6dc2" stroke-width="1.2"/><rect x="5.5" y="6" width="10" height="7.5" rx="1.5" fill="#fff" stroke="#444" stroke-width="1.2"/></svg>
<div class="t " style="left:1742px;top:121.00px;font-size:15px;color:#f4f4f4;text-shadow:0 0 1px #9ab">Info</div>
<svg style="left:1778px;top:114px;" width="74" height="25" viewBox="0 0 74 25"><defs><linearGradient id="tg2" x1="0" y1="0" x2="0" y2="1"><stop offset="0" stop-color="#ffffff"/><stop offset=".5" stop-color="#ececec"/><stop offset="1" stop-color="#b4b4b4"/></linearGradient></defs><path d="M0.5 25V7Q0.5 1 6.5 1H34C46 1 50 8 56 14C62 20 66 24 72 25z" fill="url(#tg2)"/></svg>
<div class="t " style="left:1782.5px;top:121.00px;font-size:15.5px;color:#8b1414;">Obje</div>
<div style="left:1865px;top:120px;width:4px;height:2px;border:1px solid #6b6358;border-top-width:2px;background:#fff"></div>
<div style="left:1863px;top:123px;width:4px;height:2px;border:1px solid #6b6358;border-top-width:2px;background:#fff"></div>
<div style="left:1738px;top:139px;width:147px;height:1px;background:#a3a3a3"></div>
<div style="left:1740px;top:142px;width:143px;height:836px;background:#ebebeb"></div>
<div style="left:1750px;top:157px;width:123px;height:33px;background:#f4f4f4"></div>
<div style="left:1760px;top:166px;width:12px;height:4px;background:#cfe0f7;box-shadow:inset 0 0 0 1.2px #2f6dc2"></div>
<div style="left:1750px;top:190px;width:121px;height:721px;background:#fff;border:1px solid #7f8794"></div>
<div style="left:1750px;top:913px;width:123px;height:49px;background:#f4f4f4"></div>
<div class="t " style="left:1780px;top:925.00px;font-size:19px;color:#d8002f;height:9.0px;overflow:hidden">Elemente</div>
<div style="left:1750px;top:939px;width:18px;height:18px;background:#fff;border:1px solid #333"></div>
<div class="t " style="left:1775.2px;top:942.00px;font-size:19px;color:#d8002f;width:98px;overflow:hidden;white-space:nowrap">Beim Speichern</div>
<div style="left:1897px;top:114px;width:12px;height:866px;background:linear-gradient(#d3d3d3,#ededed)"></div>
<div style="left:1901px;top:116px;width:2px;height:2px;background:#a89c84;border-radius:1px"></div>
<div style="left:1905px;top:116px;width:2px;height:2px;background:#a89c84;border-radius:1px"></div>
<div style="left:1906px;top:126px;width:4px;height:2px;border:1px solid #6b6358;border-top-width:2px;background:#d4d4d4"></div>
<div style="left:1904px;top:129px;width:4px;height:2px;border:1px solid #6b6358;border-top-width:2px;background:#d4d4d4"></div>
<div style="left:0px;top:992px;width:1909px;height:28px;background:linear-gradient(#d6d6d6,#ebebeb)"></div>
<div class="t " style="left:21.4px;top:1000.00px;font-size:18.6px;color:#d8002f;">Praktikant09 (Svea Röbke) (PRAKTIKANT09@DHOST:DAPHNE3)</div>
<div style="left:585px;top:993px;width:1324px;height:24px;background:#e6e6e6;border:1px solid #bdbdbd"></div>
</div></body></html>
